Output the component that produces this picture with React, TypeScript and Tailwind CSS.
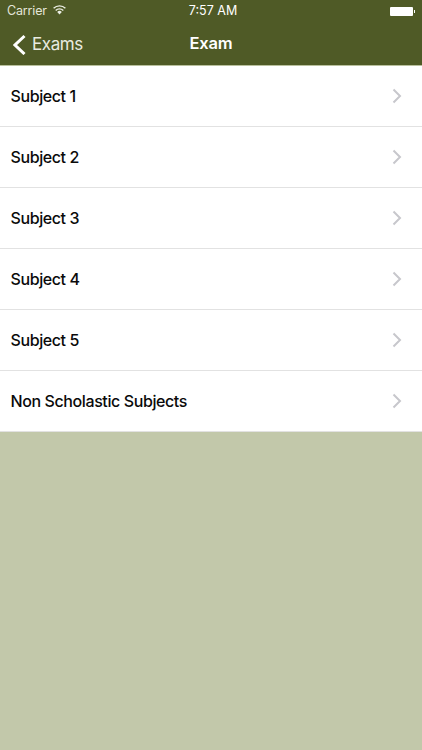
import React from "react";

const subjects = ["Subject 1", "Subject 2", "Subject 3", "Subject 4", "Subject 5", "Non Scholastic Subjects"];

const Wifi = () => (
  <svg width="13" height="10" viewBox="0 0 13 10" className="ml-[6px] mb-[3px]">
    <path d="M0.6 3.3 A8.4 8.4 0 0 1 12.4 3.3" fill="none" stroke="#eceee4" strokeWidth="1.4" />
    <path d="M2.7 5.4 A5.4 5.4 0 0 1 10.3 5.4" fill="none" stroke="#eceee4" strokeWidth="1.4" />
    <path d="M4.2 7 A3.2 3.2 0 0 1 8.8 7 L6.5 9.4 Z" fill="#eceee4" />
  </svg>
);

const Battery = () => (
  <div className="flex items-center">
    <div className="w-[23px] h-[9px] bg-white rounded-[1px]" />
    <div className="w-[1px] h-[3px] bg-white ml-[1px]" />
  </div>
);

const Chevron = () => (
  <svg width="10" height="16" viewBox="0 0 10 16">
    <path d="M1.5 1.5 L8 8 L1.5 14.5" fill="none" stroke="#c7c7cc" strokeWidth="2" />
  </svg>
);

export default function App() {
  return (
    <div className="w-[422px] h-[750px] flex flex-col bg-[#c2c8aa] font-['Inter',sans-serif]">
      <div className="bg-[#4f5a26] h-[66px] shrink-0 flex flex-col border-b border-[#b9c09d]">
        <div className="h-[22px] flex items-center justify-between pl-[7px] pr-[7px] text-[#e4e6d9]">
          <div className="flex-1 flex items-center">
            <span className="text-[12.5px] tracking-[-0.15px]">Carrier</span>
            <Wifi />
          </div>
          <span className="text-white text-[12.5px] ml-[4px]">7:57 AM</span>
          <div className="flex-1 flex justify-end">
            <Battery />
          </div>
        </div>
        <div className="relative flex-1 flex items-center justify-center pb-[1px]">
          <div className="absolute left-[13px] top-[10px] flex items-center gap-[6px]">
            <svg width="13" height="21" viewBox="0 0 13 21">
              <path d="M11.5 2 L2 11 L11.5 20" fill="none" stroke="#ffffff" strokeWidth="3" />
            </svg>
            <span className="text-[17px] tracking-[-0.4px] text-[#e9ebe0]">Exams</span>
          </div>
          <span className="text-[16.5px] tracking-[-0.2px] font-semibold text-white">Exam</span>
        </div>
      </div>
      <div>
        {subjects.map((s) => (
          <div key={s} className="h-[61px] bg-white border-b border-[#e2e2e2] flex items-center justify-between pl-[10.5px] pr-[20px]">
            <span className="text-[16px] tracking-[-0.4px] font-medium text-[#0a0a0a]">{s}</span>
            <Chevron />
          </div>
        ))}
      </div>
    </div>
  );
}
